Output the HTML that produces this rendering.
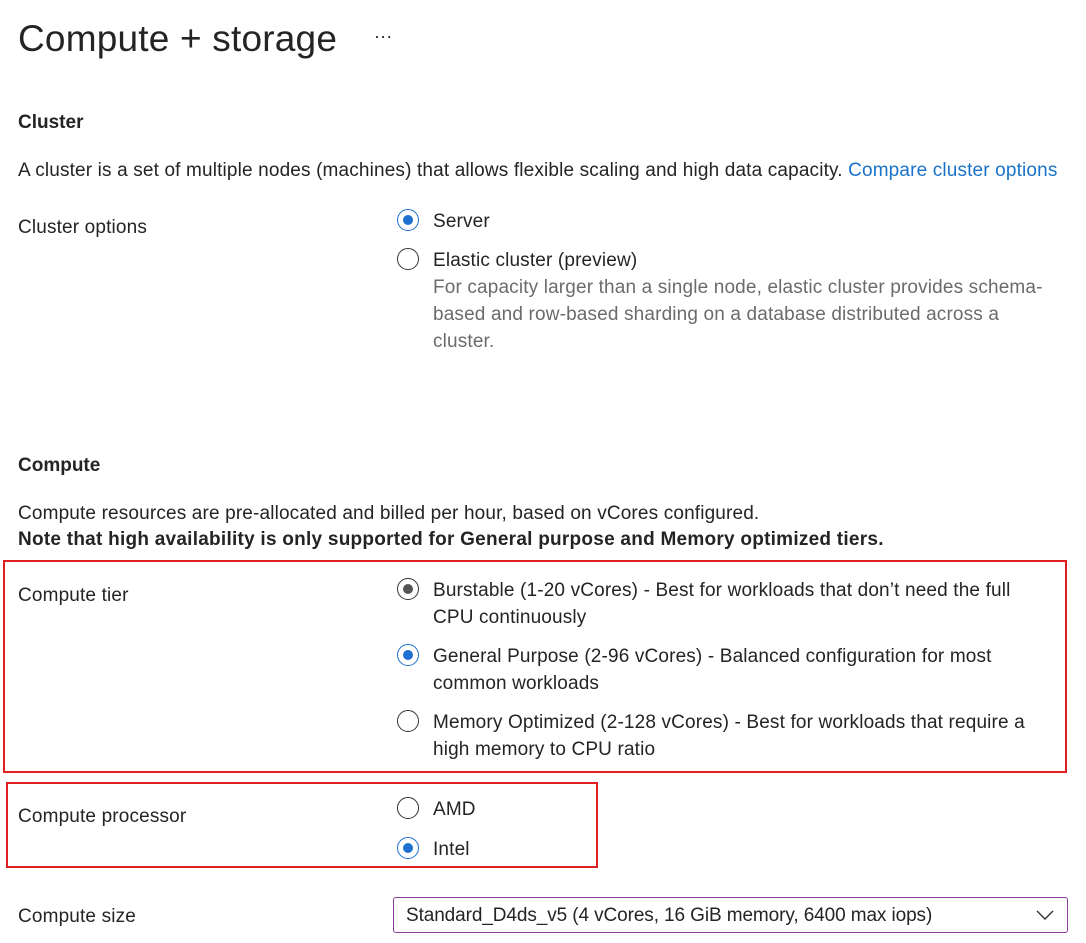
<!DOCTYPE html>
<html><head><style>
body{margin:0;width:1086px;height:943px;background:#fff;font-family:"Liberation Sans",sans-serif;color:#242424;position:relative;overflow:hidden}
.a{position:absolute;white-space:nowrap;font-size:19px;line-height:27px;letter-spacing:0.15px;margin-top:1px}
.h{font-weight:bold;font-size:19px;letter-spacing:0}
.r{position:absolute;width:22px;height:22px;border:1px solid #333;border-radius:50%;box-sizing:border-box}
.r.on{border-color:#1f6fd0}
.r.on::after,.r.g::after{content:"";position:absolute;left:5px;top:5px;width:10px;height:10px;border-radius:50%;background:#1f6fd0}
.r.g::after{background:#555}
.gray{color:#6b6b6b}
.box{position:absolute;border:2px solid #e02020;box-sizing:border-box}
</style></head><body>
<div class="a" style="left:18px;top:16px;font-size:37px;line-height:44px;letter-spacing:0.2px">Compute + storage</div>
<div class="a" style="left:374px;top:22px;font-size:18px">···</div>
<div class="a h" style="left:18px;top:108px">Cluster</div>
<div class="a" style="left:18px;top:156px">A cluster is a set of multiple nodes (machines) that allows flexible scaling and high data capacity. <span style="color:#1a73c8">Compare cluster options</span></div>
<div class="a" style="left:18px;top:213px">Cluster options</div>
<div class="r on" style="left:397px;top:209px"></div>
<div class="a" style="left:433px;top:207px">Server</div>
<div class="r" style="left:397px;top:248px"></div>
<div class="a" style="left:433px;top:246px">Elastic cluster (preview)</div>
<div class="a gray" style="left:433px;top:273px;white-space:normal;width:615px">For capacity larger than a single node, elastic cluster provides schema-based and row-based sharding on a database distributed across a cluster.</div>
<div class="a h" style="left:18px;top:451px">Compute</div>
<div class="a" style="left:18px;top:499px">Compute resources are pre-allocated and billed per hour, based on vCores configured.</div>
<div class="a" style="left:18px;top:525px;font-weight:bold;letter-spacing:0.25px">Note that high availability is only supported for General purpose and Memory optimized tiers.</div>
<div class="box" style="left:3px;top:560px;width:1064px;height:213px"></div>
<div class="a" style="left:18px;top:581px">Compute tier</div>
<div class="r g" style="left:397px;top:578px"></div>
<div class="a" style="left:433px;top:576px;white-space:normal;width:600px">Burstable (1-20 vCores) - Best for workloads that don’t need the full CPU continuously</div>
<div class="r on" style="left:397px;top:644px"></div>
<div class="a" style="left:433px;top:642px;white-space:normal;width:590px">General Purpose (2-96 vCores) - Balanced configuration for most common workloads</div>
<div class="r" style="left:397px;top:710px"></div>
<div class="a" style="left:433px;top:708px;white-space:normal;width:615px">Memory Optimized (2-128 vCores) - Best for workloads that require a high memory to CPU ratio</div>
<div class="box" style="left:6px;top:782px;width:592px;height:86px"></div>
<div class="a" style="left:18px;top:802px">Compute processor</div>
<div class="r" style="left:397px;top:797px"></div>
<div class="a" style="left:433px;top:795px">AMD</div>
<div class="r on" style="left:397px;top:837px"></div>
<div class="a" style="left:433px;top:835px">Intel</div>
<div class="a" style="left:18px;top:902px">Compute size</div>
<div style="position:absolute;left:393px;top:897px;width:675px;height:36px;border:1px solid #8a3c99;border-radius:3px;box-sizing:border-box"></div>
<div class="a" style="left:406px;top:901px;letter-spacing:-0.1px">Standard_D4ds_v5 (4 vCores, 16 GiB memory, 6400 max iops)</div>
<svg style="position:absolute;left:1035px;top:908px" width="20" height="14"><path d="M2 3 L10 11 L18 3" stroke="#333" stroke-width="1.4" fill="none"/></svg>
</body></html>
